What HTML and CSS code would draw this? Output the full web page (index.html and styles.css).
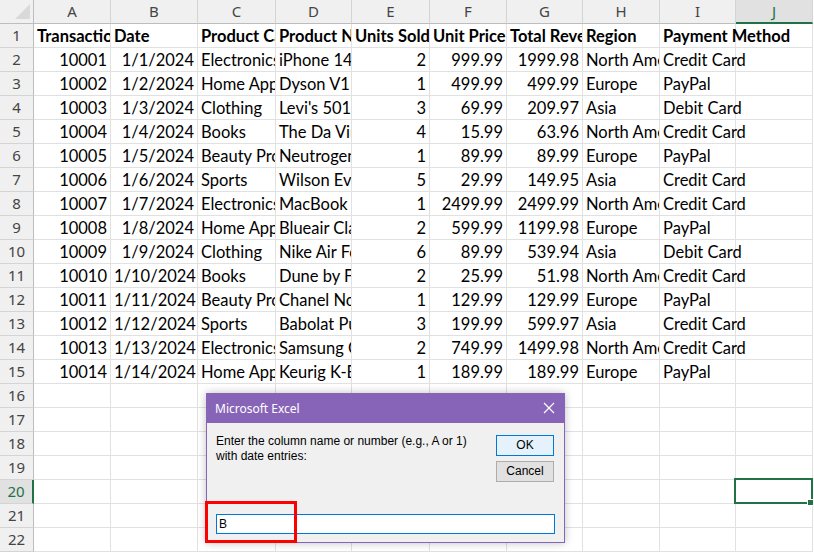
FILE: index.html
```html
<!DOCTYPE html>
<html>
<head>
<meta charset="utf-8">
<link rel="stylesheet" href="styles.css">
</head>
<body>
<div class="sheet">
  <div class="hd corner"><svg width="34" height="24" viewBox="0 0 34 24"><polygon points="15,19 30,19 30,4" fill="#D9D9D9"/></svg></div>
  <div class="hd">A</div><div class="hd">B</div><div class="hd">C</div><div class="hd">D</div><div class="hd">E</div><div class="hd">F</div><div class="hd">G</div><div class="hd">H</div><div class="hd">I</div><div class="hd hsel">J</div>

  <div class="rh">1</div><div class="c b">Transaction ID</div><div class="c b">Date</div><div class="c b">Product Category</div><div class="c b">Product Name</div><div class="c b">Units Sold</div><div class="c b">Unit Price</div><div class="c b">Total Revenue</div><div class="c b">Region</div><div class="c b ov">Payment Method</div><div class="c"></div>

  <div class="rh">2</div><div class="c n">10001</div><div class="c n">1/1/2024</div><div class="c">Electronics</div><div class="c">iPhone 14</div><div class="c n">2</div><div class="c n">999.99</div><div class="c n">1999.98</div><div class="c">North America</div><div class="c ov">Credit Card</div><div class="c"></div>
  <div class="rh">3</div><div class="c n">10002</div><div class="c n">1/2/2024</div><div class="c">Home Appliances</div><div class="c">Dyson V11</div><div class="c n">1</div><div class="c n">499.99</div><div class="c n">499.99</div><div class="c">Europe</div><div class="c ov">PayPal</div><div class="c"></div>
  <div class="rh">4</div><div class="c n">10003</div><div class="c n">1/3/2024</div><div class="c">Clothing</div><div class="c">Levi's 501</div><div class="c n">3</div><div class="c n">69.99</div><div class="c n">209.97</div><div class="c">Asia</div><div class="c ov">Debit Card</div><div class="c"></div>
  <div class="rh">5</div><div class="c n">10004</div><div class="c n">1/4/2024</div><div class="c">Books</div><div class="c">The Da Vinci Code</div><div class="c n">4</div><div class="c n">15.99</div><div class="c n">63.96</div><div class="c">North America</div><div class="c ov">Credit Card</div><div class="c"></div>
  <div class="rh">6</div><div class="c n">10005</div><div class="c n">1/5/2024</div><div class="c">Beauty Products</div><div class="c">Neutrogena Hydro Boost</div><div class="c n">1</div><div class="c n">89.99</div><div class="c n">89.99</div><div class="c">Europe</div><div class="c ov">PayPal</div><div class="c"></div>
  <div class="rh">7</div><div class="c n">10006</div><div class="c n">1/6/2024</div><div class="c">Sports</div><div class="c">Wilson Evolution Basketball</div><div class="c n">5</div><div class="c n">29.99</div><div class="c n">149.95</div><div class="c">Asia</div><div class="c ov">Credit Card</div><div class="c"></div>
  <div class="rh">8</div><div class="c n">10007</div><div class="c n">1/7/2024</div><div class="c">Electronics</div><div class="c">MacBook Pro</div><div class="c n">1</div><div class="c n">2499.99</div><div class="c n">2499.99</div><div class="c">North America</div><div class="c ov">Credit Card</div><div class="c"></div>
  <div class="rh">9</div><div class="c n">10008</div><div class="c n">1/8/2024</div><div class="c">Home Appliances</div><div class="c">Blueair Classic 480i</div><div class="c n">2</div><div class="c n">599.99</div><div class="c n">1199.98</div><div class="c">Europe</div><div class="c ov">PayPal</div><div class="c"></div>
  <div class="rh">10</div><div class="c n">10009</div><div class="c n">1/9/2024</div><div class="c">Clothing</div><div class="c">Nike Air Force 1</div><div class="c n">6</div><div class="c n">89.99</div><div class="c n">539.94</div><div class="c">Asia</div><div class="c ov">Debit Card</div><div class="c"></div>
  <div class="rh">11</div><div class="c n">10010</div><div class="c n">1/10/2024</div><div class="c">Books</div><div class="c">Dune by Frank Herbert</div><div class="c n">2</div><div class="c n">25.99</div><div class="c n">51.98</div><div class="c">North America</div><div class="c ov">Credit Card</div><div class="c"></div>
  <div class="rh">12</div><div class="c n">10011</div><div class="c n">1/11/2024</div><div class="c">Beauty Products</div><div class="c">Chanel No. 5</div><div class="c n">1</div><div class="c n">129.99</div><div class="c n">129.99</div><div class="c">Europe</div><div class="c ov">PayPal</div><div class="c"></div>
  <div class="rh">13</div><div class="c n">10012</div><div class="c n">1/12/2024</div><div class="c">Sports</div><div class="c">Babolat Pure Drive</div><div class="c n">3</div><div class="c n">199.99</div><div class="c n">599.97</div><div class="c">Asia</div><div class="c ov">Credit Card</div><div class="c"></div>
  <div class="rh">14</div><div class="c n">10013</div><div class="c n">1/13/2024</div><div class="c">Electronics</div><div class="c">Samsung Galaxy S23</div><div class="c n">2</div><div class="c n">749.99</div><div class="c n">1499.98</div><div class="c">North America</div><div class="c ov">Credit Card</div><div class="c"></div>
  <div class="rh">15</div><div class="c n">10014</div><div class="c n">1/14/2024</div><div class="c">Home Appliances</div><div class="c">Keurig K-Elite</div><div class="c n">1</div><div class="c n">189.99</div><div class="c n">189.99</div><div class="c">Europe</div><div class="c ov">PayPal</div><div class="c"></div>

  <div class="rh">16</div><div class="c"></div><div class="c"></div><div class="c"></div><div class="c"></div><div class="c"></div><div class="c"></div><div class="c"></div><div class="c"></div><div class="c"></div><div class="c"></div>
  <div class="rh">17</div><div class="c"></div><div class="c"></div><div class="c"></div><div class="c"></div><div class="c"></div><div class="c"></div><div class="c"></div><div class="c"></div><div class="c"></div><div class="c"></div>
  <div class="rh">18</div><div class="c"></div><div class="c"></div><div class="c"></div><div class="c"></div><div class="c"></div><div class="c"></div><div class="c"></div><div class="c"></div><div class="c"></div><div class="c"></div>
  <div class="rh">19</div><div class="c"></div><div class="c"></div><div class="c"></div><div class="c"></div><div class="c"></div><div class="c"></div><div class="c"></div><div class="c"></div><div class="c"></div><div class="c"></div>
  <div class="rh rsel">20</div><div class="c"></div><div class="c"></div><div class="c"></div><div class="c"></div><div class="c"></div><div class="c"></div><div class="c"></div><div class="c"></div><div class="c"></div><div class="c active"></div>
  <div class="rh">21</div><div class="c"></div><div class="c"></div><div class="c"></div><div class="c"></div><div class="c"></div><div class="c"></div><div class="c"></div><div class="c"></div><div class="c"></div><div class="c"></div>
  <div class="rh">22</div><div class="c"></div><div class="c"></div><div class="c"></div><div class="c"></div><div class="c"></div><div class="c"></div><div class="c"></div><div class="c"></div><div class="c"></div><div class="c"></div>
</div>

<div class="dialog">
  <div class="titlebar">
    <span class="title">Microsoft Excel</span>
    <svg class="close" width="12" height="12" viewBox="0 0 12 12"><path d="M1 1 L11 11 M11 1 L1 11" stroke="#fff" stroke-width="1.2" fill="none"/></svg>
  </div>
  <div class="dbody">
    <div class="top">
      <p class="prompt">Enter the column name or number (e.g., A or 1)<br>with date entries:</p>
      <div class="buttons">
        <div class="btn ok">OK</div>
        <div class="btn">Cancel</div>
      </div>
    </div>
    <div class="input">B</div>
  </div>
</div>
<div class="highlight"></div>
</body>
</html>
```

FILE: styles.css
```css
* { box-sizing: border-box; }
html, body { margin: 0; padding: 0; }
body {
  width: 814px;
  height: 552px;
  overflow: hidden;
  background: #fff;
  font-family: Lato, "Liberation Sans", sans-serif;
  position: relative;
}
.sheet {
  display: grid;
  grid-template-columns: 34px 77px 87px 78px 76px 78px 77px 76px 77px 76px 77px;
  grid-auto-rows: 24px;
}
.hd {
  background: #F0F0F0;
  border-right: 1px solid #D4D4D4;
  border-bottom: 1px solid #BDBDBD;
  font-family: "Noto Sans", "Liberation Sans", sans-serif;
  font-size: 15px;
  color: #444;
  text-align: center;
  line-height: 23px;
}
.corner { border-right: 1px solid #BDBDBD; padding: 0; line-height: 0; }
.hsel { background: #E1E1E1; border-bottom: 2px solid #217346; color: #217346; }
.rh {
  background: #F0F0F0;
  border-right: 1px solid #BDBDBD;
  border-bottom: 1px solid #D4D4D4;
  font-family: "Noto Sans", "Liberation Sans", sans-serif;
  font-size: 15px;
  color: #444;
  text-align: center;
  line-height: 23px;
}
.rsel { background: #E1E1E1; border-right: 2px solid #217346; color: #217346; }
.c {
  border-right: 1px solid #E1E1E1;
  border-bottom: 1px solid #E1E1E1;
  font-size: 16.5px;
  line-height: 23px;
  color: #000;
  padding: 1px 3px 0 3px;
  white-space: nowrap;
  overflow: hidden;
}
.n { text-align: right; }
.b { font-weight: bold; }
.ov { overflow: visible; position: relative; z-index: 1; }
.active { position: relative; overflow: visible; }
.active::after {
  content: "";
  position: absolute;
  left: -2px; top: -2px; right: -1px; bottom: -1px;
  border: 2px solid #217346;
}
.active::before {
  content: "";
  position: absolute;
  right: -2px; bottom: -3px;
  width: 5px; height: 5px;
  background: #217346;
  border: 1px solid #fff;
  z-index: 2;
}
.dialog {
  position: absolute;
  left: 206px; top: 393px;
  width: 359px; height: 150px;
  background: #F0F0F0;
  border: 1px solid #8764B8;
  box-shadow: 0 0 8px rgba(0,0,0,0.25);
  font-family: "Liberation Sans", sans-serif;
  font-size: 12px;
  z-index: 5;
}
.titlebar {
  height: 30px;
  background: #8764B8;
  display: flex;
  align-items: center;
  justify-content: space-between;
  padding: 0 10px 0 9px;
  margin: -1px -1px 0 -1px;
}
.title { color: #fff; font-family: "Noto Sans", sans-serif; font-size: 12px; }
.close { display: block; }
.dbody { padding: 10px 9px 0 9px; }
.top { display: flex; justify-content: space-between; height: 81px; }
.prompt { margin: 0; padding-top: 1px; line-height: 15px; color: #000; }
.buttons { display: flex; flex-direction: column; gap: 5px; padding-top: 2px; margin-right: 1px; }
.btn {
  width: 58px; height: 21px;
  background: #E1E1E1;
  border: 1px solid #ADADAD;
  text-align: center;
  line-height: 19px;
  color: #000;
}
.btn.ok { background: #E5F1FB; border-color: #0078D7; }
.input {
  width: 339px; height: 20px;
  background: #fff;
  border: 1px solid #0078D7;
  padding-left: 2px;
  line-height: 18px;
  font-size: 12px;
  color: #000;
}
.highlight {
  position: absolute;
  left: 205px; top: 501px;
  width: 92px; height: 42px;
  border: 3px solid #FF0000;
  z-index: 6;
}
```
